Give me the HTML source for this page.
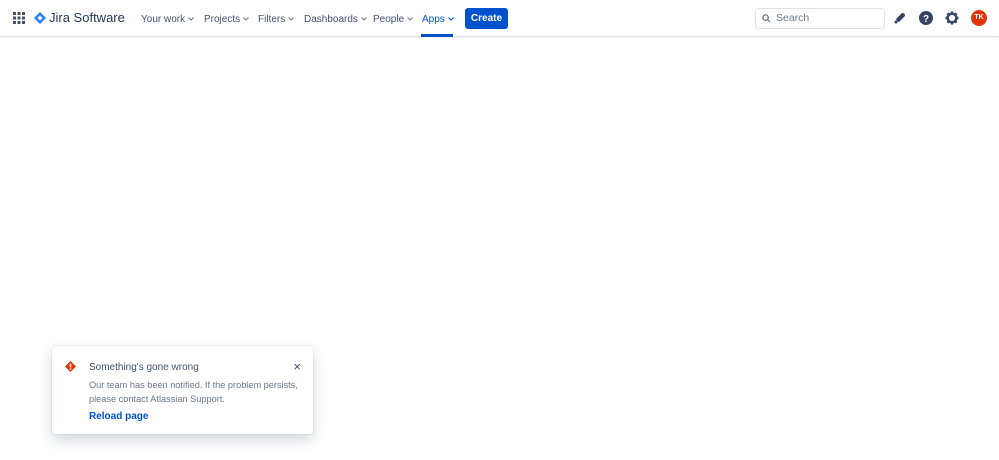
<!DOCTYPE html>
<html><head><meta charset="utf-8"><style>
*{box-sizing:border-box;margin:0;padding:0}
body{width:999px;height:460px;background:#fff;font-family:"Liberation Sans",sans-serif;position:relative;overflow:hidden}
.nav{position:absolute;left:0;top:0;width:999px;height:37px;border-bottom:1px solid #dfe1e6;box-shadow:0 1px 1px rgba(9,30,66,.08)}
.it{position:absolute;top:13px;font-size:10px;color:#42526e;white-space:nowrap;line-height:13px}
.it svg{margin-left:3px;vertical-align:1px}
.card{position:absolute;left:52px;top:346px;width:261px;height:88px;border-radius:3px;box-shadow:0 6px 14px rgba(9,30,66,.18),0 0 1px rgba(9,30,66,.3);background:#fff}
</style></head><body>
<div class="nav">
<svg style="position:absolute;left:13px;top:12px" width="12" height="12" viewBox="0 0 12 12" fill="#42526e"><rect x="0" y="0" width="3" height="3"/><rect x="4.5" y="0" width="3" height="3"/><rect x="9" y="0" width="3" height="3"/><rect x="0" y="4.5" width="3" height="3"/><rect x="4.5" y="4.5" width="3" height="3"/><rect x="9" y="4.5" width="3" height="3"/><rect x="0" y="9" width="3" height="3"/><rect x="4.5" y="9" width="3" height="3"/><rect x="9" y="9" width="3" height="3"/></svg>
<svg style="position:absolute;left:34px;top:12px" width="12" height="12" viewBox="0 0 12 12"><path d="M6 0L12 6L6 12L0 6Z" fill="#2684ff"/><path d="M6 3.5L8.5 6L6 8.5L3.5 6Z" fill="#fff"/></svg>
<div style="position:absolute;left:49px;top:10px;font-size:13px;color:#253858">Jira Software</div>
<div class="it" style="left:141px">Your work<svg width="6" height="4" viewBox="0 0 6 4"><path d="M0.5 0.5L3 3L5.5 0.5" fill="none" stroke="#6b778c" stroke-width="1"/></svg></div>
<div class="it" style="left:204px">Projects<svg width="6" height="4" viewBox="0 0 6 4"><path d="M0.5 0.5L3 3L5.5 0.5" fill="none" stroke="#6b778c" stroke-width="1"/></svg></div>
<div class="it" style="left:258px">Filters<svg width="6" height="4" viewBox="0 0 6 4"><path d="M0.5 0.5L3 3L5.5 0.5" fill="none" stroke="#6b778c" stroke-width="1"/></svg></div>
<div class="it" style="left:304px">Dashboards<svg width="6" height="4" viewBox="0 0 6 4"><path d="M0.5 0.5L3 3L5.5 0.5" fill="none" stroke="#6b778c" stroke-width="1"/></svg></div>
<div class="it" style="left:373px">People<svg width="6" height="4" viewBox="0 0 6 4"><path d="M0.5 0.5L3 3L5.5 0.5" fill="none" stroke="#6b778c" stroke-width="1"/></svg></div>
<div class="it" style="left:422px;color:#0052cc">Apps<svg width="6" height="4" viewBox="0 0 6 4"><path d="M0.5 0.5L3 3L5.5 0.5" fill="none" stroke="#0052cc" stroke-width="1"/></svg></div>
<div style="position:absolute;left:421px;top:34px;width:32px;height:3px;background:#0052cc"></div>
<div style="position:absolute;left:465px;top:8px;width:43px;height:21px;background:#0052cc;border-radius:3px;color:#fff;font-size:10px;font-weight:bold;text-align:center;line-height:22px">Create</div>
<div style="position:absolute;left:755px;top:8px;width:130px;height:21px;border:1px solid #dfe1e6;border-radius:4px;font-size:10.5px;color:#6b778c;line-height:19px;padding-left:20px">Search
<svg style="position:absolute;left:6px;top:5px" width="9" height="9" viewBox="0 0 10 10"><circle cx="4" cy="4" r="3" fill="none" stroke="#6b778c" stroke-width="1.4"/><path d="M6.3 6.3L9 9" stroke="#6b778c" stroke-width="1.4"/></svg></div>
<svg style="position:absolute;left:893px;top:11px" width="14" height="14" viewBox="0 0 14 14"><path d="M1 12L4 10.5L3 8L8.5 2.5C10.5 1 13 3.5 11.5 5.5L6 11L3.5 10Z" fill="#344563"/><circle cx="3" cy="11" r="1.5" fill="#344563"/></svg>
<svg style="position:absolute;left:919px;top:11px" width="14" height="14" viewBox="0 0 14 14"><circle cx="7" cy="7" r="7" fill="#344563"/><text x="7" y="11" font-size="10" font-weight="bold" text-anchor="middle" fill="#fff" font-family="Liberation Sans">?</text></svg>
<svg style="position:absolute;left:945px;top:11px" width="14" height="14" viewBox="0 0 14 14"><circle cx="7" cy="7" r="4.3" fill="none" stroke="#344563" stroke-width="2.4"/><g stroke="#344563" stroke-width="2.4"><path d="M7 0.5V3M7 11V13.5M0.5 7H3M11 7H13.5M2.4 2.4L4 4M10 10L11.6 11.6M11.6 2.4L10 4M4 10L2.4 11.6"/></g></svg>
<div style="position:absolute;left:971px;top:10px;width:16px;height:16px;border-radius:50%;background:#de350b;color:#fff;font-size:7px;font-weight:bold;text-align:center;line-height:16px">TK</div>
</div>
<div class="card">
<svg style="position:absolute;left:13px;top:15px" width="11" height="11" viewBox="0 0 12 12"><path d="M6 0L12 6L6 12L0 6Z" fill="#de350b"/><rect x="5.2" y="3" width="1.6" height="4" fill="#fff"/><rect x="5.2" y="8" width="1.6" height="1.6" fill="#fff"/></svg>
<div style="position:absolute;left:37px;top:16px;font-size:10px;color:#42526e">Something's gone wrong</div>
<div style="position:absolute;right:12px;top:13px;font-size:13px;color:#42526e">×</div>
<div style="position:absolute;left:37px;top:32px;white-space:nowrap;font-size:9.2px;line-height:14px;color:#6b778c">Our team has been notified. If the problem persists,<br>please contact Atlassian Support.</div>
<div style="position:absolute;left:37px;top:65px;font-size:10px;color:#0052cc;font-weight:bold">Reload page</div>
</div>
</body></html>
